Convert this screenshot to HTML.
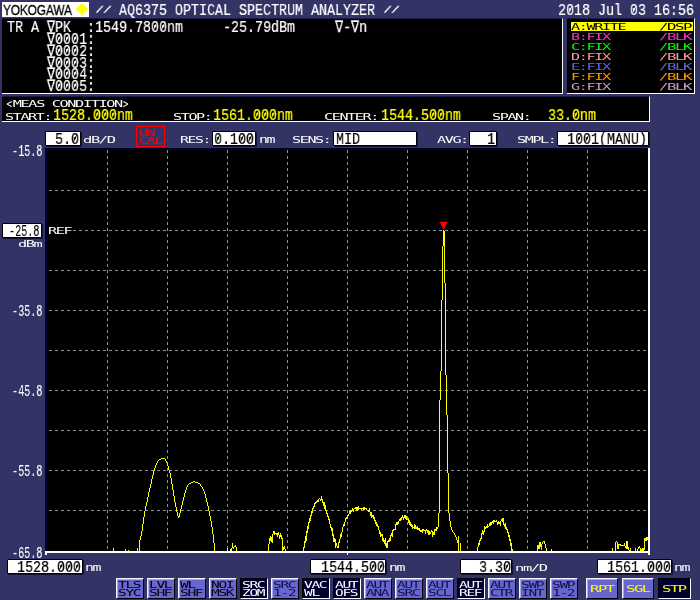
<!DOCTYPE html>
<html><head><meta charset="utf-8"><title>AQ6375 OPTICAL SPECTRUM ANALYZER</title>
<style>
html,body{margin:0;padding:0}
body{width:700px;height:600px;overflow:hidden;background:#333366;position:relative}
div{position:absolute;box-sizing:border-box}
.b,.n,.s{white-space:pre;transform-origin:0 0;will-change:transform}
.b{font:16.5px/20px "Liberation Mono",monospace;transform:scaleX(.808);-webkit-text-stroke:.2px currentColor}
.n{font:16.5px/20px "Liberation Mono",monospace;transform:scaleX(.616);-webkit-text-stroke:.12px currentColor}
.s{font:9.2px/10px "DejaVu Sans Mono","Liberation Mono",monospace;letter-spacing:-0.845px}
.lt{display:inline-block;transform:scale(.6,1.4);transform-origin:50% 55%}
.b.sl{transform-origin:0 8.5px;transform:scale(.929,.56);letter-spacing:-1.29px;-webkit-text-stroke:.35px currentColor}
.pan{background:#000;border-right:1px solid #fff;border-bottom:1px solid #fff;border-top:1px solid #1c1c48}
.box{background:#fff;border:1px solid #000;border-radius:1px;box-shadow:1px 1px 0 #111138}
.btn{width:28px;height:21px;top:578px;background:#6666cc;border-top:1px solid #f4f4ff;border-left:1px solid #f4f4ff;border-right:1px solid #000;border-bottom:1px solid #000;box-shadow:inset 1px 1px 0 #a8a8e6}
.btn.on{box-shadow:none;background:#00002e;border-top:1px solid #000;border-left:1px solid #000;border-right:1px solid #fff;border-bottom:1px solid #fff}
.btn.w{width:32px}
</style></head><body>
<div style="left:2px;top:2px;width:87px;height:15px;background:#fff"></div>
<div style="left:3px;top:1px;font:15px/18px 'Liberation Sans',sans-serif;color:#000;transform:scaleX(.795);transform-origin:0 0;white-space:pre;letter-spacing:-.2px;will-change:transform;-webkit-text-stroke:.35px #000">YOKOGAWA</div>
<svg style="position:absolute;left:75px;top:2px" width="14" height="15" viewBox="0 0 14 15"><polygon points="7,1 13.2,7 7,12.8 0.8,7" fill="#ffff00"/><rect x="6.3" y="12" width="1.6" height="1.8" fill="#ffff00"/></svg>
<div class="b sl" style="left:94.5px;top:1px;color:#fff">//</div>
<div class="b" style="left:119px;top:1px;color:#fff;">AQ6375 OPTICAL SPECTRUM ANALYZER</div>
<div class="b sl" style="left:382.5px;top:1px;color:#fff">//</div>
<div class="b" style="left:558.3px;top:1px;color:#fff;">2018 Jul 03 16:56</div>
<div class="pan" style="left:2px;top:18px;width:561px;height:76px"></div>
<div class="b" style="left:7px;top:18px;color:#fff;">TR A ∇PK  :1549.7800nm     -25.79dBm     ∇-∇n</div>
<div class="b" style="left:7px;top:30px;color:#fff;">     ∇0001:</div>
<div class="b" style="left:7px;top:42px;color:#fff;">     ∇0002:</div>
<div class="b" style="left:7px;top:54px;color:#fff;">     ∇0003:</div>
<div class="b" style="left:7px;top:65px;color:#fff;">     ∇0004:</div>
<div class="b" style="left:7px;top:77px;color:#fff;">     ∇0005:</div>
<div class="pan" style="left:567px;top:18px;width:128px;height:76px"></div>
<div style="left:571px;top:22px;width:122px;height:9px;background:#ffff00"></div>
<div class="s" style="left:571.2px;top:22.4px;color:#000;transform:scaleX(1.651)">A:WRITE</div>
<div class="s" style="left:659.0px;top:22.4px;color:#000;transform:scaleX(1.715)">/DSP</div>
<div class="s" style="left:571.2px;top:32.4px;color:#ff33cc;transform:scaleX(1.651)">B:FIX</div>
<div class="s" style="left:659.0px;top:32.4px;color:#ff33cc;transform:scaleX(1.715)">/BLK</div>
<div class="s" style="left:571.2px;top:42.4px;color:#00ff00;transform:scaleX(1.651)">C:FIX</div>
<div class="s" style="left:659.0px;top:42.4px;color:#00ff00;transform:scaleX(1.715)">/BLK</div>
<div class="s" style="left:571.2px;top:52.4px;color:#ff9999;transform:scaleX(1.651)">D:FIX</div>
<div class="s" style="left:659.0px;top:52.4px;color:#ff9999;transform:scaleX(1.715)">/BLK</div>
<div class="s" style="left:571.2px;top:62.4px;color:#6666cc;transform:scaleX(1.651)">E:FIX</div>
<div class="s" style="left:659.0px;top:62.4px;color:#6666cc;transform:scaleX(1.715)">/BLK</div>
<div class="s" style="left:571.2px;top:72.4px;color:#ff9900;transform:scaleX(1.651)">F:FIX</div>
<div class="s" style="left:659.0px;top:72.4px;color:#ff9900;transform:scaleX(1.715)">/BLK</div>
<div class="s" style="left:571.2px;top:82.4px;color:#cc99cc;transform:scaleX(1.651)">G:FIX</div>
<div class="s" style="left:659.0px;top:82.4px;color:#cc99cc;transform:scaleX(1.715)">/BLK</div>
<div class="pan" style="left:2px;top:96px;width:648px;height:26px"></div>
<div class="s" style="left:5.2px;top:99px;color:#fff;transform:scaleX(1.662)"><span class="lt">&lt;</span>MEAS CONDITION<span class="lt">&gt;</span></div>
<div class="s" style="left:4.7px;top:112px;color:#fff;transform:scaleX(1.641)">START:</div>
<div class="b" style="left:53px;top:106px;color:#ffff00;">1528.000nm</div>
<div class="s" style="left:172.7px;top:112px;color:#fff;transform:scaleX(1.641)">STOP:</div>
<div class="b" style="left:213px;top:106px;color:#ffff00;">1561.000nm</div>
<div class="s" style="left:324.2px;top:112px;color:#fff;transform:scaleX(1.641)">CENTER:</div>
<div class="b" style="left:381px;top:106px;color:#ffff00;">1544.500nm</div>
<div class="s" style="left:492.2px;top:112px;color:#fff;transform:scaleX(1.641)">SPAN:</div>
<div class="b" style="left:548px;top:106px;color:#ffff00;">33.0nm</div>
<div class="box" style="left:45px;top:131px;width:36px;height:15px"></div>
<div class="b" style="left:55px;top:130px;color:#000;">5.0</div>
<div class="s" style="left:83.4px;top:135px;color:#fff;transform:scaleX(1.683)">dB/D</div>
<div style="left:136px;top:126px;width:29px;height:21px;border:1px solid #ff0000"></div>
<div class="s" style="left:138.7px;top:128px;color:#ff0000;transform:scaleX(1.619)">UN</div>
<div class="s" style="left:138.7px;top:136px;color:#ff0000;transform:scaleX(1.662)">CAL</div>
<div class="s" style="left:179.7px;top:135px;color:#fff;transform:scaleX(1.598)">RES:</div>
<div class="box" style="left:212px;top:131px;width:44px;height:15px"></div>
<div class="b" style="left:214px;top:130px;color:#000;">0.100</div>
<div class="s" style="left:258.7px;top:134px;font-size:10.8px;line-height:12px;letter-spacing:-0.992px;color:#fff;transform:scaleX(1.379)">nm</div>
<div class="s" style="left:292.2px;top:135px;color:#fff;transform:scaleX(1.641)">SENS:</div>
<div class="box" style="left:333px;top:131px;width:84px;height:15px"></div>
<div class="b" style="left:336px;top:130px;color:#000;">MID</div>
<div class="s" style="left:436.7px;top:135px;color:#fff;transform:scaleX(1.641)">AVG:</div>
<div class="box" style="left:469px;top:131px;width:28px;height:15px"></div>
<div class="b" style="left:487px;top:130px;color:#000;">1</div>
<div class="s" style="left:516.7px;top:135px;color:#fff;transform:scaleX(1.641)">SMPL:</div>
<div class="box" style="left:557px;top:131px;width:92px;height:15px"></div>
<div class="b" style="left:567px;top:130px;color:#000;">1001(MANU)</div>
<div style="left:45px;top:148px;width:605px;height:405px;background:#000;border-left:2px solid #00002a;border-top:2px solid #00002a;border-right:2px solid #fff;border-bottom:2px solid #fff"></div>
<svg style="position:absolute;left:0;top:0" width="700" height="600" viewBox="0 0 700 600"><g stroke="#929292" stroke-width="1" stroke-dasharray="3 3" shape-rendering="crispEdges"><line x1="107.5" y1="150" x2="107.5" y2="551"/><line x1="167.5" y1="150" x2="167.5" y2="551"/><line x1="227.5" y1="150" x2="227.5" y2="551"/><line x1="287.5" y1="150" x2="287.5" y2="551"/><line x1="347.5" y1="150" x2="347.5" y2="551"/><line x1="407.5" y1="150" x2="407.5" y2="551"/><line x1="467.5" y1="150" x2="467.5" y2="551"/><line x1="527.5" y1="150" x2="527.5" y2="551"/><line x1="587.5" y1="150" x2="587.5" y2="551"/><line x1="49" y1="190.5" x2="648" y2="190.5"/><line x1="49" y1="230.5" x2="648" y2="230.5"/><line x1="49" y1="270.5" x2="648" y2="270.5"/><line x1="49" y1="310.5" x2="648" y2="310.5"/><line x1="49" y1="350.5" x2="648" y2="350.5"/><line x1="49" y1="390.5" x2="648" y2="390.5"/><line x1="49" y1="430.5" x2="648" y2="430.5"/><line x1="49" y1="470.5" x2="648" y2="470.5"/><line x1="49" y1="510.5" x2="648" y2="510.5"/></g><path fill="none" stroke="#ffff00" stroke-width="1" shape-rendering="crispEdges" d="M113.5 548V552M125.5 549V552M128.5 550V552M137.5 548V552M139.5 540V552M140.5 536V540M141.5 531V536M142.5 524V531M143.5 517V524M144.5 511V517M145.5 506V511M146.5 502V506M147.5 497V502M148.5 492V497M149.5 488V492M150.5 484V488M151.5 479V484M152.5 475V479M153.5 471V475M154.5 468V471M155.5 465V468M156.5 463V465M157.5 461V463M158.5 460V461M159.5 459V460M160.5 459V460M161.5 458V459M162.5 458V459M163.5 458V459M164.5 458V459M165.5 459V461M166.5 461V463M167.5 463V466M168.5 466V470M169.5 470V473M170.5 473V478M171.5 478V484M172.5 484V490M173.5 490V496M174.5 496V502M175.5 502V507M176.5 507V512M177.5 512V516M178.5 516V518M179.5 513V517M180.5 509V513M181.5 505V509M182.5 501V505M183.5 497V501M184.5 493V497M185.5 490V493M186.5 487V490M187.5 485V487M188.5 484V485M189.5 483V484M190.5 483V484M191.5 482V483M192.5 482V483M193.5 481V482M194.5 481V482M195.5 482V483M196.5 482V483M197.5 482V483M198.5 483V484M199.5 483V484M200.5 484V486M201.5 486V487M202.5 487V489M203.5 489V491M204.5 491V494M205.5 494V498M206.5 498V502M207.5 502V506M208.5 506V511M209.5 511V516M210.5 516V521M211.5 521V527M212.5 527V534M213.5 534V543M214.5 543V552M227.5 548V552M230.5 549V552M231.5 548V552M232.5 543V548M233.5 547V549M234.5 546V547M235.5 545V547M236.5 547V552M268.5 544V552M269.5 538V544M270.5 536V541M271.5 537V542M272.5 534V543M273.5 531V534M274.5 531V535M275.5 533V534M276.5 533V535M277.5 533V537M278.5 532V535M279.5 535V539M280.5 533V537M281.5 535V539M282.5 538V552M283.5 547V550M284.5 546V549M285.5 549V552M303.5 547V552M304.5 541V548M305.5 536V543M306.5 531V541M307.5 526V533M308.5 522V529M309.5 518V523M310.5 515V521M311.5 511V516M312.5 508V513M313.5 506V509M314.5 503V507M315.5 502V504M316.5 501V503M317.5 500V502M318.5 499V502M319.5 498V499M320.5 499V501M321.5 496V500M322.5 499V503M323.5 502V506M324.5 502V509M325.5 505V511M326.5 510V514M327.5 513V517M328.5 516V520M329.5 519V524M330.5 524V528M331.5 527V531M332.5 528V536M333.5 534V542M334.5 538V542M335.5 539V548M336.5 543V546M337.5 546V548M338.5 542V548M339.5 539V543M340.5 534V539M341.5 532V537M342.5 527V532M343.5 524V527M344.5 522V526M345.5 518V522M346.5 517V519M347.5 515V518M348.5 514V516M349.5 511V514M350.5 510V514M351.5 510V512M352.5 508V511M353.5 509V512M354.5 508V509M355.5 507V509M356.5 507V511M357.5 507V511M358.5 506V510M359.5 508V509M360.5 508V509M361.5 508V510M362.5 508V509M363.5 507V510M364.5 507V510M365.5 508V509M366.5 508V510M367.5 510V511M368.5 510V512M369.5 508V512M370.5 512V516M371.5 512V518M372.5 515V517M373.5 515V519M374.5 517V521M375.5 520V524M376.5 522V526M377.5 524V527M378.5 526V530M379.5 530V534M380.5 532V537M381.5 534V536M382.5 534V541M383.5 538V542M384.5 540V544M385.5 538V546M386.5 543V548M387.5 541V548M388.5 540V542M389.5 538V542M390.5 535V541M391.5 533V536M392.5 530V537M393.5 529V531M394.5 529V530M395.5 524V530M396.5 522V525M397.5 522V525M398.5 521V524M399.5 519V521M400.5 518V521M401.5 517V520M402.5 515V518M403.5 517V520M404.5 515V518M405.5 515V519M406.5 516V520M407.5 519V520M408.5 518V523M409.5 520V525M410.5 522V526M411.5 524V527M412.5 525V529M413.5 527V528M414.5 524V529M415.5 525V529M416.5 527V529M417.5 526V530M418.5 528V530M419.5 528V531M420.5 530V532M421.5 530V532M422.5 529V533M423.5 529V531M424.5 530V531M425.5 530V534M426.5 529V531M427.5 530V533M428.5 530V535M429.5 531V535M430.5 532V534M431.5 530V532M432.5 531V537M433.5 532V535M434.5 529V535M435.5 529V531M436.5 527V531M437.5 527V529M438.5 513V527M439.5 400V513M440.5 371V400M441.5 300V371M442.5 246V300M443.5 230V246M444.5 231V283M445.5 283V375M446.5 375V415M447.5 415V473M448.5 473V513M449.5 513V521M450.5 521V527M451.5 527V530M452.5 530V532M453.5 532V533M454.5 533V535M455.5 535V537M456.5 537V540M457.5 540V543M458.5 536V552M460.5 543V552M477.5 547V552M478.5 543V547M479.5 540V545M480.5 538V541M481.5 533V539M482.5 530V534M483.5 531V535M484.5 526V532M485.5 527V529M486.5 526V528M487.5 524V528M488.5 526V527M489.5 523V526M490.5 522V526M491.5 522V525M492.5 521V523M493.5 520V524M494.5 520V522M495.5 521V522M496.5 520V522M497.5 522V525M498.5 521V524M499.5 522V524M500.5 521V526M501.5 519V521M502.5 518V522M503.5 518V525M504.5 524V527M505.5 523V529M506.5 527V530M507.5 529V533M508.5 532V537M509.5 535V541M510.5 539V546M511.5 543V552M512.5 549V552M537.5 545V552M538.5 545V549M539.5 542V549M540.5 542V547M541.5 544V550M542.5 542V544M543.5 541V542M544.5 541V544M545.5 544V548M546.5 548V551M551.5 549V552M612.5 548V552M615.5 542V552M616.5 541V542M617.5 542V549M618.5 544V549M619.5 544V545M620.5 544V546M621.5 545V546M622.5 545V546M623.5 545V546M624.5 543V546M625.5 546V548M626.5 541V549M627.5 541V549M628.5 547V550M629.5 550V552M630.5 548V552M635.5 548V552M637.5 549V552M638.5 547V549M639.5 546V548M640.5 548V552M641.5 549V552M642.5 548V552M643.5 548V552M644.5 538V550M645.5 538V541M646.5 537V541M647.5 537V540"/><polygon points="439.6,221.7 447.6,221.7 443.6,229.8" fill="#ff0000"/><rect x="347" y="553" width="1" height="2" fill="#fff"/></svg>
<div style="left:45px;top:551px;width:605px;height:2px;background:#fff"></div>
<div style="left:648px;top:148px;width:2px;height:407px;background:#fff"></div>
<div style="left:45px;top:551px;width:2px;height:4px;background:#fff"></div>
<div class="n" style="left:11.9px;top:142px;color:#fff">-15.8</div>
<div class="n" style="left:11.9px;top:302px;color:#fff">-35.8</div>
<div class="n" style="left:11.9px;top:382px;color:#fff">-45.8</div>
<div class="n" style="left:11.9px;top:462px;color:#fff">-55.8</div>
<div class="n" style="left:11.9px;top:544px;color:#fff">-65.8</div>
<div class="box" style="left:2px;top:223px;width:40px;height:15px"></div>
<div class="n" style="left:8.9px;top:222px;color:#000">-25.8</div>
<div class="s" style="left:18.2px;top:239.3px;color:#fff;transform:scaleX(1.662)">dBm</div>
<div style="left:48px;top:225px;width:25px;height:11px;background:#000"></div>
<div class="s" style="left:48.2px;top:226px;color:#fff;transform:scaleX(1.641)">REF</div>
<div class="box" style="left:7px;top:559px;width:76px;height:15px"></div>
<div class="b" style="left:17px;top:558px;color:#000;">1528.000</div>
<div class="s" style="left:84.9px;top:562px;font-size:10.8px;line-height:12px;letter-spacing:-0.992px;color:#fff;transform:scaleX(1.379)">nm</div>
<div class="box" style="left:310px;top:559px;width:76px;height:15px"></div>
<div class="b" style="left:321px;top:558px;color:#000;">1544.500</div>
<div class="s" style="left:388.7px;top:562px;font-size:10.8px;line-height:12px;letter-spacing:-0.992px;color:#fff;transform:scaleX(1.379)">nm</div>
<div class="box" style="left:460px;top:559px;width:52px;height:15px"></div>
<div class="b" style="left:479px;top:558px;color:#000;">3.30</div>
<div class="s" style="left:514.7px;top:563px;color:#fff;transform:scaleX(1.683)">nm/D</div>
<div class="box" style="left:597px;top:559px;width:75px;height:15px"></div>
<div class="b" style="left:607px;top:558px;color:#000;">1561.000</div>
<div class="s" style="left:674.4px;top:562px;font-size:10.8px;line-height:12px;letter-spacing:-0.992px;color:#fff;transform:scaleX(1.379)">nm</div>
<div class="btn" style="left:116px"></div>
<div class="s" style="left:118.3px;top:580.3px;color:#000;transform:scaleX(1.577)">TLS</div>
<div class="s" style="left:118.3px;top:588px;color:#000;transform:scaleX(1.577)">SYC</div>
<div class="btn" style="left:147px"></div>
<div class="s" style="left:149.3px;top:580.3px;color:#000;transform:scaleX(1.577)">LVL</div>
<div class="s" style="left:149.3px;top:588px;color:#000;transform:scaleX(1.577)">SHF</div>
<div class="btn" style="left:178px"></div>
<div class="s" style="left:180.3px;top:580.3px;color:#000;transform:scaleX(1.577)">WL</div>
<div class="s" style="left:180.3px;top:588px;color:#000;transform:scaleX(1.577)">SHF</div>
<div class="btn" style="left:209px"></div>
<div class="s" style="left:211.3px;top:580.3px;color:#000;transform:scaleX(1.577)">NOI</div>
<div class="s" style="left:211.3px;top:588px;color:#000;transform:scaleX(1.577)">MSK</div>
<div class="btn on" style="left:240px"></div>
<div class="s" style="left:242.3px;top:580.3px;color:#fff;transform:scaleX(1.577)">SRC</div>
<div class="s" style="left:242.3px;top:588px;color:#fff;transform:scaleX(1.577)">ZOM</div>
<div class="btn" style="left:271px"></div>
<div class="s" style="left:273.3px;top:580.3px;color:#10104c;transform:scaleX(1.577)">SRC</div>
<div class="s" style="left:273.3px;top:588px;color:#10104c;transform:scaleX(1.577)">1-2</div>
<div class="btn on" style="left:302px"></div>
<div class="s" style="left:304.3px;top:580.3px;color:#fff;transform:scaleX(1.577)">VAC</div>
<div class="s" style="left:304.3px;top:588px;color:#fff;transform:scaleX(1.577)">WL</div>
<div class="btn on" style="left:333px"></div>
<div class="s" style="left:335.3px;top:580.3px;color:#fff;transform:scaleX(1.577)">AUT</div>
<div class="s" style="left:335.3px;top:588px;color:#fff;transform:scaleX(1.577)">OFS</div>
<div class="btn" style="left:364px"></div>
<div class="s" style="left:366.3px;top:580.3px;color:#10104c;transform:scaleX(1.577)">AUT</div>
<div class="s" style="left:366.3px;top:588px;color:#10104c;transform:scaleX(1.577)">ANA</div>
<div class="btn" style="left:395px"></div>
<div class="s" style="left:397.3px;top:580.3px;color:#10104c;transform:scaleX(1.577)">AUT</div>
<div class="s" style="left:397.3px;top:588px;color:#10104c;transform:scaleX(1.577)">SRC</div>
<div class="btn" style="left:426px"></div>
<div class="s" style="left:428.3px;top:580.3px;color:#10104c;transform:scaleX(1.577)">AUT</div>
<div class="s" style="left:428.3px;top:588px;color:#10104c;transform:scaleX(1.577)">SCL</div>
<div class="btn on" style="left:457px"></div>
<div class="s" style="left:459.3px;top:580.3px;color:#fff;transform:scaleX(1.577)">AUT</div>
<div class="s" style="left:459.3px;top:588px;color:#fff;transform:scaleX(1.577)">REF</div>
<div class="btn" style="left:488px"></div>
<div class="s" style="left:490.3px;top:580.3px;color:#10104c;transform:scaleX(1.577)">AUT</div>
<div class="s" style="left:490.3px;top:588px;color:#10104c;transform:scaleX(1.577)">CTR</div>
<div class="btn" style="left:519px"></div>
<div class="s" style="left:521.3px;top:580.3px;color:#10104c;transform:scaleX(1.577)">SWP</div>
<div class="s" style="left:521.3px;top:588px;color:#10104c;transform:scaleX(1.577)">INT</div>
<div class="btn" style="left:550px"></div>
<div class="s" style="left:552.3px;top:580.3px;color:#10104c;transform:scaleX(1.577)">SWP</div>
<div class="s" style="left:552.3px;top:588px;color:#10104c;transform:scaleX(1.577)">1-2</div>
<div class="btn w" style="left:586px"></div>
<div class="s" style="left:589.7px;top:583.6px;color:#ffff00;transform:scaleX(1.683)">RPT</div>
<div class="btn w" style="left:622px"></div>
<div class="s" style="left:625.7px;top:583.6px;color:#ffff00;transform:scaleX(1.683)">SGL</div>
<div class="btn w on" style="left:658px;width:33px"></div>
<div class="s" style="left:661.7px;top:583.6px;color:#ffff00;transform:scaleX(1.683)">STP</div>
<svg style="position:absolute;left:0;top:0" width="700" height="600" viewBox="0 0 700 600"><g stroke-width="1" stroke-linecap="butt"><line x1="568.8" y1="12.7" x2="571.8" y2="6.3" stroke="#fff"/><line x1="632.8" y1="12.7" x2="635.8" y2="6.3" stroke="#fff"/><line x1="153.5" y1="29.7" x2="156.5" y2="23.3" stroke="#fff"/><line x1="161.5" y1="29.7" x2="164.5" y2="23.3" stroke="#fff"/><line x1="57.5" y1="41.7" x2="60.5" y2="35.3" stroke="#fff"/><line x1="65.5" y1="41.7" x2="68.5" y2="35.3" stroke="#fff"/><line x1="73.5" y1="41.7" x2="76.5" y2="35.3" stroke="#fff"/><line x1="57.5" y1="53.7" x2="60.5" y2="47.3" stroke="#fff"/><line x1="65.5" y1="53.7" x2="68.5" y2="47.3" stroke="#fff"/><line x1="73.5" y1="53.7" x2="76.5" y2="47.3" stroke="#fff"/><line x1="57.5" y1="65.7" x2="60.5" y2="59.3" stroke="#fff"/><line x1="65.5" y1="65.7" x2="68.5" y2="59.3" stroke="#fff"/><line x1="73.5" y1="65.7" x2="76.5" y2="59.3" stroke="#fff"/><line x1="57.5" y1="76.7" x2="60.5" y2="70.3" stroke="#fff"/><line x1="65.5" y1="76.7" x2="68.5" y2="70.3" stroke="#fff"/><line x1="73.5" y1="76.7" x2="76.5" y2="70.3" stroke="#fff"/><line x1="57.5" y1="88.7" x2="60.5" y2="82.3" stroke="#fff"/><line x1="65.5" y1="88.7" x2="68.5" y2="82.3" stroke="#fff"/><line x1="73.5" y1="88.7" x2="76.5" y2="82.3" stroke="#fff"/><line x1="95.5" y1="117.7" x2="98.5" y2="111.3" stroke="#ffff00"/><line x1="103.5" y1="117.7" x2="106.5" y2="111.3" stroke="#ffff00"/><line x1="111.5" y1="117.7" x2="114.5" y2="111.3" stroke="#ffff00"/><line x1="255.5" y1="117.7" x2="258.5" y2="111.3" stroke="#ffff00"/><line x1="263.5" y1="117.7" x2="266.5" y2="111.3" stroke="#ffff00"/><line x1="271.5" y1="117.7" x2="274.5" y2="111.3" stroke="#ffff00"/><line x1="431.5" y1="117.7" x2="434.5" y2="111.3" stroke="#ffff00"/><line x1="439.5" y1="117.7" x2="442.5" y2="111.3" stroke="#ffff00"/><line x1="574.5" y1="117.7" x2="577.5" y2="111.3" stroke="#ffff00"/><line x1="73.5" y1="141.7" x2="76.5" y2="135.3" stroke="#000"/><line x1="216.5" y1="141.7" x2="219.5" y2="135.3" stroke="#000"/><line x1="240.5" y1="141.7" x2="243.5" y2="135.3" stroke="#000"/><line x1="248.5" y1="141.7" x2="251.5" y2="135.3" stroke="#000"/><line x1="577.5" y1="141.7" x2="580.5" y2="135.3" stroke="#000"/><line x1="585.5" y1="141.7" x2="588.5" y2="135.3" stroke="#000"/><line x1="59.5" y1="569.7" x2="62.5" y2="563.3" stroke="#000"/><line x1="67.5" y1="569.7" x2="70.5" y2="563.3" stroke="#000"/><line x1="75.5" y1="569.7" x2="78.5" y2="563.3" stroke="#000"/><line x1="371.5" y1="569.7" x2="374.5" y2="563.3" stroke="#000"/><line x1="379.5" y1="569.7" x2="382.5" y2="563.3" stroke="#000"/><line x1="505.5" y1="569.7" x2="508.5" y2="563.3" stroke="#000"/><line x1="649.5" y1="569.7" x2="652.5" y2="563.3" stroke="#000"/><line x1="657.5" y1="569.7" x2="660.5" y2="563.3" stroke="#000"/><line x1="665.5" y1="569.7" x2="668.5" y2="563.3" stroke="#000"/></g></svg>
</body></html>
